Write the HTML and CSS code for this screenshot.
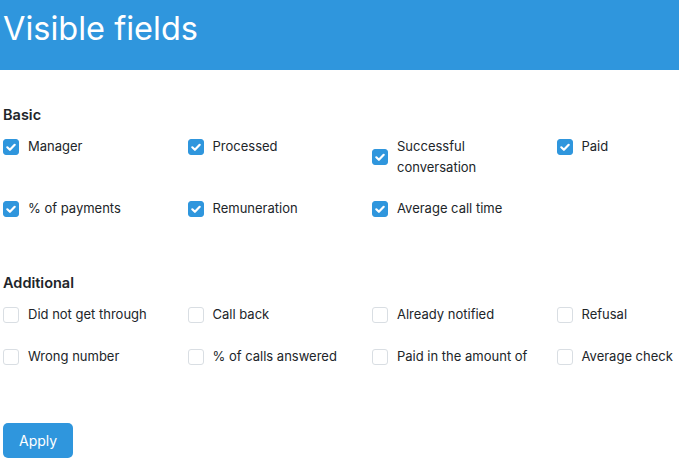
FILE: index.html
```html
<!DOCTYPE html>
<html lang="en">
<head>
<meta charset="utf-8">
<title>Visible fields</title>
<link rel="stylesheet" href="styles.css">
</head>
<body>
<header class="page-header">
  <h1 class="page-title">Visible fields</h1>
</header>
<main class="content">
  <section class="group group-basic">
    <h2 class="group-title">Basic</h2>
    <div class="field-grid">
      <label class="field"><span class="box checked"><svg viewBox="0 0 16 16" width="16" height="16"><path d="M4.3 8.3l2.6 2.5 4.8-5" fill="none" stroke="#fff" stroke-width="2.2" stroke-linecap="round" stroke-linejoin="round"/></svg></span><span class="field-label">Manager</span></label>
      <label class="field"><span class="box checked"><svg viewBox="0 0 16 16" width="16" height="16"><path d="M4.3 8.3l2.6 2.5 4.8-5" fill="none" stroke="#fff" stroke-width="2.2" stroke-linecap="round" stroke-linejoin="round"/></svg></span><span class="field-label">Processed</span></label>
      <label class="field"><span class="box checked"><svg viewBox="0 0 16 16" width="16" height="16"><path d="M4.3 8.3l2.6 2.5 4.8-5" fill="none" stroke="#fff" stroke-width="2.2" stroke-linecap="round" stroke-linejoin="round"/></svg></span><span class="field-label">Successful conversation</span></label>
      <label class="field"><span class="box checked"><svg viewBox="0 0 16 16" width="16" height="16"><path d="M4.3 8.3l2.6 2.5 4.8-5" fill="none" stroke="#fff" stroke-width="2.2" stroke-linecap="round" stroke-linejoin="round"/></svg></span><span class="field-label">Paid</span></label>
      <label class="field"><span class="box checked"><svg viewBox="0 0 16 16" width="16" height="16"><path d="M4.3 8.3l2.6 2.5 4.8-5" fill="none" stroke="#fff" stroke-width="2.2" stroke-linecap="round" stroke-linejoin="round"/></svg></span><span class="field-label">% of payments</span></label>
      <label class="field"><span class="box checked"><svg viewBox="0 0 16 16" width="16" height="16"><path d="M4.3 8.3l2.6 2.5 4.8-5" fill="none" stroke="#fff" stroke-width="2.2" stroke-linecap="round" stroke-linejoin="round"/></svg></span><span class="field-label">Remuneration</span></label>
      <label class="field"><span class="box checked"><svg viewBox="0 0 16 16" width="16" height="16"><path d="M4.3 8.3l2.6 2.5 4.8-5" fill="none" stroke="#fff" stroke-width="2.2" stroke-linecap="round" stroke-linejoin="round"/></svg></span><span class="field-label">Average call time</span></label>
    </div>
  </section>
  <section class="group group-additional">
    <h2 class="group-title">Additional</h2>
    <div class="field-grid">
      <label class="field"><span class="box"></span><span class="field-label">Did not get through</span></label>
      <label class="field"><span class="box"></span><span class="field-label">Call back</span></label>
      <label class="field"><span class="box"></span><span class="field-label">Already notified</span></label>
      <label class="field"><span class="box"></span><span class="field-label">Refusal</span></label>
      <label class="field"><span class="box"></span><span class="field-label">Wrong number</span></label>
      <label class="field"><span class="box"></span><span class="field-label">% of calls answered</span></label>
      <label class="field"><span class="box"></span><span class="field-label">Paid in the amount of</span></label>
      <label class="field"><span class="box"></span><span class="field-label">Average check</span></label>
    </div>
  </section>
  <button class="btn-apply" type="button">Apply</button>
</main>
</body>
</html>
```
FILE: styles.css
```css
html, body {
  margin: 0;
  padding: 0;
}
body {
  font-family: Inter, "Noto Sans", sans-serif;
  color: #212529;
  background: #fff;
  overflow-x: hidden;
}
.page-header {
  background: #2f96dd;
  height: 70px;
  box-sizing: border-box;
  padding: 7px 3px 0;
}
.page-title {
  margin: 0;
  font-size: 32.5px;
  font-weight: 400;
  line-height: 44px;
  color: #fff;
}
.content {
  padding: 34px 3px 0;
}
.group-title {
  margin: 0 0 11px;
  font-size: 14.5px;
  font-weight: 600;
  line-height: 21px;
}
.group-additional {
  margin-top: 53px;
}
.group-additional .field-grid {
  row-gap: 21px;
}
.field-grid {
  display: grid;
  grid-template-columns: repeat(4, 184.5px);
  row-gap: 20px;
  align-items: start;
}
.field {
  display: flex;
  align-items: center;
  gap: 9px;
  font-size: 13px;
  line-height: 21px;
  padding-right: 20px;
}
.box {
  flex: none;
  width: 16px;
  height: 16px;
  box-sizing: border-box;
  border: 1px solid #d9dee3;
  border-radius: 3px;
  background: #fff;
  display: flex;
}
.box.checked {
  border-color: #2f96dd;
  background: #2f96dd;
}
.box svg {
  margin: -1px;
}
.btn-apply {
  margin-top: 56px;
  display: block;
  background: #2f96dd;
  color: #fff;
  border: none;
  border-radius: 5px;
  font-family: Inter, "Noto Sans", sans-serif;
  font-size: 14px;
  line-height: 23px;
  padding: 6px 16px;
  width: 70px;
  height: 35px;
}
```
